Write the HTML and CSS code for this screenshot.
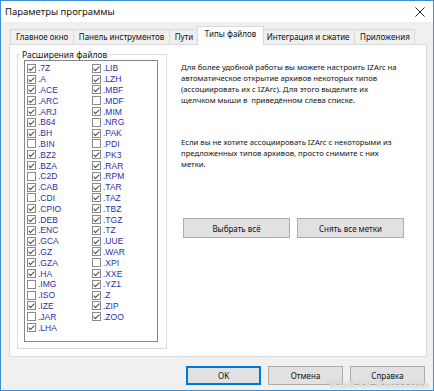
FILE: index.html
```html
<html>
<head>
    <meta charset="utf-8">
    <link rel="stylesheet" href="styles.css">
</head>
<body>
    <div class="window">
        <div class="titlebar">
            <span class="title">Параметры программы</span>
            <svg class="close" width="10" height="10" viewBox="0 0 10 10">
                <path d="M0.5 0.5 L9.5 9.5 M9.5 0.5 L0.5 9.5" stroke="#222" stroke-width="1" fill="none"/>
            </svg>
        </div>

        <div class="content">
            <div class="tabs">
                <div class="tab">Главное окно</div>
                <div class="tab">Панель инструментов</div>
                <div class="tab">Пути</div>
                <div class="tab active">Типы файлов</div>
                <div class="tab">Интеграция и сжатие</div>
                <div class="tab">Приложения</div>
            </div>

            <div class="panel">
                <fieldset class="group">
                    <legend>Расширения файлов</legend>
                    <div class="list">
                        <div class="item"><span class="cb on"></span>.7Z</div>
                        <div class="item"><span class="cb on"></span>.A</div>
                        <div class="item"><span class="cb on"></span>.ACE</div>
                        <div class="item"><span class="cb on"></span>.ARC</div>
                        <div class="item"><span class="cb on"></span>.ARJ</div>
                        <div class="item"><span class="cb on"></span>.B64</div>
                        <div class="item"><span class="cb on"></span>.BH</div>
                        <div class="item"><span class="cb"></span>.BIN</div>
                        <div class="item"><span class="cb on"></span>.BZ2</div>
                        <div class="item"><span class="cb on"></span>.BZA</div>
                        <div class="item"><span class="cb"></span>.C2D</div>
                        <div class="item"><span class="cb on"></span>.CAB</div>
                        <div class="item"><span class="cb"></span>.CDI</div>
                        <div class="item"><span class="cb on"></span>.CPIO</div>
                        <div class="item"><span class="cb on"></span>.DEB</div>
                        <div class="item"><span class="cb on"></span>.ENC</div>
                        <div class="item"><span class="cb on"></span>.GCA</div>
                        <div class="item"><span class="cb on"></span>.GZ</div>
                        <div class="item"><span class="cb on"></span>.GZA</div>
                        <div class="item"><span class="cb on"></span>.HA</div>
                        <div class="item"><span class="cb"></span>.IMG</div>
                        <div class="item"><span class="cb"></span>.ISO</div>
                        <div class="item"><span class="cb on"></span>.IZE</div>
                        <div class="item"><span class="cb"></span>.JAR</div>
                        <div class="item"><span class="cb on"></span>.LHA</div>

                        <div class="item"><span class="cb on"></span>.LIB</div>
                        <div class="item"><span class="cb on"></span>.LZH</div>
                        <div class="item"><span class="cb on"></span>.MBF</div>
                        <div class="item"><span class="cb"></span>.MDF</div>
                        <div class="item"><span class="cb on"></span>.MIM</div>
                        <div class="item"><span class="cb"></span>.NRG</div>
                        <div class="item"><span class="cb on"></span>.PAK</div>
                        <div class="item"><span class="cb"></span>.PDI</div>
                        <div class="item"><span class="cb on"></span>.PK3</div>
                        <div class="item"><span class="cb on"></span>.RAR</div>
                        <div class="item"><span class="cb on"></span>.RPM</div>
                        <div class="item"><span class="cb on"></span>.TAR</div>
                        <div class="item"><span class="cb on"></span>.TAZ</div>
                        <div class="item"><span class="cb on"></span>.TBZ</div>
                        <div class="item"><span class="cb on"></span>.TGZ</div>
                        <div class="item"><span class="cb on"></span>.TZ</div>
                        <div class="item"><span class="cb on"></span>.UUE</div>
                        <div class="item"><span class="cb on"></span>.WAR</div>
                        <div class="item"><span class="cb"></span>.XPI</div>
                        <div class="item"><span class="cb on"></span>.XXE</div>
                        <div class="item"><span class="cb on"></span>.YZ1</div>
                        <div class="item"><span class="cb on"></span>.Z</div>
                        <div class="item"><span class="cb on"></span>.ZIP</div>
                        <div class="item"><span class="cb on"></span>.ZOO</div>
                    </div>
                </fieldset>

                <div class="info">
                    <p>Для более удобной работы вы можете настроить IZArc на<br>
                    автоматическое открытие архивов некоторых типов<br>
                    (ассоциировать их с IZArc). Для этого выделите их<br>
                    щелчком мыши в&nbsp; приведённом слева списке.</p>
                    <p>Если вы не хотите ассоциировать IZArc с некоторыми из<br>
                    предложенных типов архивов, просто снимите с них<br>
                    метки.</p>
                    <div class="actions">
                        <button class="btn wide">Выбрать всё</button>
                        <button class="btn wide">Снять все метки</button>
                    </div>
                </div>
            </div>

            <div class="footer">
                <button class="btn default">OK</button>
                <button class="btn">Отмена</button>
                <button class="btn">Справка</button>
            </div>
        </div>

        <div class="watermark">WinRAR-Russia.com</div>
    </div>
</body>
</html>
```

FILE: styles.css
```css
html, body {
    margin: 0;
    padding: 0;
}
body {
    width: 434px;
    height: 391px;
    overflow: hidden;
    font-family: "Noto Sans", "Open Sans", sans-serif;
    font-size: 8px;
    color: #111;
}
.window {
    position: relative;
    box-sizing: border-box;
    width: 434px;
    height: 391px;
    border: 1px solid #3d8ed6;
    background: #f0f0f0;
    display: flex;
    flex-direction: column;
}
.titlebar {
    height: 21px;
    flex: none;
    background: #fff;
    display: flex;
    align-items: center;
    justify-content: space-between;
    padding: 0 8px 0 4px;
}
.title {
    font-size: 9.5px;
}
.close {
    display: block;
}

.content {
    flex: 1;
    display: flex;
    flex-direction: column;
    padding: 0 6px 0 8px;
}
.tabs {
    height: 22px;
    display: flex;
    align-items: flex-end;
    padding-left: 1px;
}
.tab {
    box-sizing: border-box;
    height: 15px;
    line-height: 14px;
    padding: 0 4.5px 0 5px;
    margin-left: -1px;
    border: 1px solid #d9d9d9;
    border-bottom: none;
    background: #f0f0f0;
    white-space: nowrap;
}
.tab:first-child {
    margin-left: 0;
}
.tab.active {
    position: relative;
    z-index: 1;
    height: 19px;
    line-height: 14px;
    padding: 0 6.5px 0 7px;
    margin: 0 -2px -1px -2px;
    background: #fff;
}

.panel {
    box-sizing: border-box;
    height: 313px;
    display: flex;
    padding: 4px 0 0 7px;
    border: 1px solid #d9d9d9;
    background: #fff;
}
.group {
    box-sizing: border-box;
    width: 150px;
    height: 300px;
    margin: 0;
    padding: 0 8px 7px 6px;
    border: 1px solid #dcdcdc;
}
.group legend {
    margin-left: -4px;
    padding: 0 2px;
    line-height: 11px;
    font-size: 8.5px;
}
.list {
    box-sizing: border-box;
    width: 134px;
    height: 282px;
    padding: 2px 0 0 2px;
    border: 1px solid #828790;
    display: grid;
    grid-template-columns: 65px 65px;
    grid-template-rows: repeat(25, 10.8px);
    grid-auto-flow: column;
}
.item {
    display: flex;
    align-items: center;
    gap: 2px;
    font-family: "Liberation Sans", sans-serif;
    font-size: 8.5px;
    color: #2e2ea6;
}
.cb {
    position: relative;
    flex: none;
    box-sizing: border-box;
    width: 9px;
    height: 9px;
    border: 1px solid #8a8a8a;
    background: #fff;
}
.cb.on::after {
    content: "";
    position: absolute;
    left: 2px;
    top: 0;
    width: 2px;
    height: 5px;
    border: solid #444;
    border-width: 0 1px 1px 0;
    transform: rotate(45deg);
}

.info {
    margin-left: 14px;
    padding-top: 12.5px;
    line-height: 11px;
    font-size: 7.7px;
    white-space: nowrap;
}
.info p {
    margin: 0;
}
.info p + p {
    margin-top: 31px;
}
.actions {
    display: flex;
    gap: 7px;
    margin: 48.5px 0 0 2px;
}

.btn {
    box-sizing: border-box;
    width: 75px;
    height: 19px;
    padding: 0;
    font-family: inherit;
    font-size: 8px;
    color: #111;
    background: #e1e1e1;
    border: 1px solid #adadad;
}
.btn.wide {
    width: 107px;
    height: 20px;
}
.btn.default {
    border-color: #0078d7;
    box-shadow: inset 0 0 0 1px #0078d7;
}
.footer {
    display: flex;
    justify-content: flex-end;
    gap: 7px;
    margin-top: 9px;
    padding-right: 2px;
}

.watermark {
    position: absolute;
    right: 4px;
    bottom: 1px;
    line-height: 9px;
    font-family: "Liberation Serif", serif;
    font-weight: bold;
    font-size: 11px;
    color: rgba(255, 255, 255, 0.75);
    text-shadow: 0 0 1px #9a9a9a;
}
```
